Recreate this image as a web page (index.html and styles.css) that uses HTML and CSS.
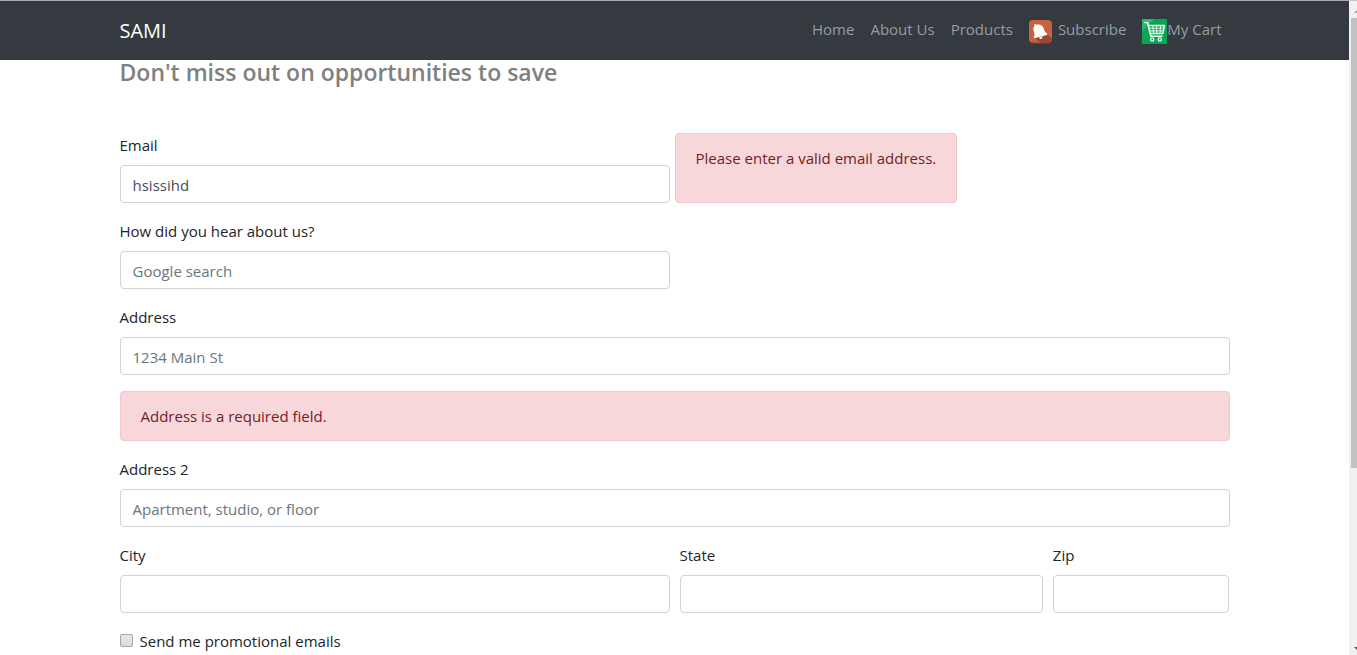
FILE: index.html
```html
<!DOCTYPE html>
<html lang="en">
<head>
<meta charset="utf-8">
<meta name="viewport" content="width=device-width, initial-scale=1">
<title>SAMI</title>
<link rel="stylesheet" href="styles.css">
</head>
<body>
<div class="page">
  <header class="navbar">
    <div class="container navbar-inner">
      <a class="brand" href="#">SAMI</a>
      <nav class="nav">
        <a class="nav-link" href="#">Home</a>
        <a class="nav-link" href="#">About Us</a>
        <a class="nav-link" href="#">Products</a>
        <a class="nav-link nav-link-spaced" href="#">
          <svg class="nav-icon" viewBox="0 0 25 25" aria-hidden="true">
            <rect x="0" y="1.5" width="23" height="23" rx="4" fill="#8f4329"/>
            <rect x="0" y="1" width="23" height="22.5" rx="4" fill="#c8613f"/>
            <path d="M18 15.500 23 19.500V20q0 3.500-4 3.500H11.500L5 18.500Z" fill="#974a30"/>
            <path d="M5.200 5.300 6.500 4.700 7.300 5.900C10.600 4.900 13.700 6.500 14.700 9.500 15.600 12.400 16.300 13.600 18.300 14.700L18 16.100 5.200 19.300 4.700 18C6 16.500 5.700 15 4.800 12.500 4 10.100 4.300 8 5.800 6.700Z" fill="#fff"/>
            <path d="M10 18.500 13.600 17.600Q13.600 19.800 11.900 20 10.400 20.100 10 18.500Z" fill="#fff"/>
          </svg>
          <span>Subscribe</span>
        </a>
        <a class="nav-link" href="#">
          <svg class="nav-icon" viewBox="0 0 25 25" aria-hidden="true">
            <rect width="25" height="25" fill="#08a552"/>
            <path d="M0 0H12L0 13Z" fill="#2bb56d"/>
            <g fill="none" stroke="#e9fff2" stroke-linecap="round" stroke-linejoin="round">
              <path d="M2.500 3.500H5.500L8.800 17.200H20M6 6.500H22.500L20.800 14.500H8.300" stroke-width="1.500"/>
              <path d="M7 9.200H21.800M7.800 11.900H21.200M10.800 6.500 11.500 14.500M14.600 6.500V14.500M18.600 6.500 18 14.500" stroke-width="1"/>
              <circle cx="10.300" cy="20.500" r="1.600" stroke-width="1.300"/>
              <circle cx="17.800" cy="20.500" r="1.600" stroke-width="1.300"/>
            </g>
          </svg>
          <span>My Cart</span>
        </a>
      </nav>
    </div>
  </header>

  <main class="container">
    <h1 class="title">Don't miss out on opportunities to save</h1>
    <form class="form">
      <div class="row">
        <div class="field span-6">
          <label for="email">Email</label>
          <input id="email" type="text" value="hsissihd">
        </div>
        <div class="alert alert-side" role="alert">Please enter a valid email address.</div>
      </div>
      <div class="row">
        <div class="field span-6">
          <label for="source">How did you hear about us?</label>
          <input id="source" type="text" placeholder="Google search">
        </div>
      </div>
      <div class="field">
        <label for="address">Address</label>
        <input id="address" type="text" placeholder="1234 Main St">
      </div>
      <div class="alert" role="alert">Address is a required field.</div>
      <div class="field">
        <label for="address2">Address 2</label>
        <input id="address2" type="text" placeholder="Apartment, studio, or floor">
      </div>
      <div class="row">
        <div class="field span-6">
          <label for="city">City</label>
          <input id="city" type="text">
        </div>
        <div class="field span-4">
          <label for="state">State</label>
          <input id="state" type="text">
        </div>
        <div class="field span-2">
          <label for="zip">Zip</label>
          <input id="zip" type="text">
        </div>
      </div>
      <div class="check">
        <input id="promo" type="checkbox">
        <label for="promo">Send me promotional emails</label>
      </div>
    </form>
  </main>
</div>
<div class="scrollbar" aria-hidden="true">
  <svg class="scroll-arrow" viewBox="0 0 8 17"><path d="M5 12 9 8V12Z" fill="#a3a3a3"/></svg>
  <div class="scroll-track"><div class="scroll-thumb"></div></div>
  <svg class="scroll-arrow" viewBox="0 0 8 17"><path d="M5 9H9V13Z" fill="#505050"/></svg>
</div>
</body>
</html>
```

FILE: styles.css
```css
*,
*::before,
*::after {
  box-sizing: border-box;
}

body {
  display: flex;
  min-height: 100vh;
  margin: 0;
  background: #fff;
  color: #212529;
  font-family: "Segoe UI", "Open Sans", "Noto Sans", sans-serif;
  font-size: 15px;
  line-height: 24px;
}

.page {
  flex: 1;
  min-width: 0;
}

.container {
  width: 100%;
  max-width: 1140px;
  margin: 0 auto;
  padding: 0 15px;
}

.navbar {
  padding: 9px 0;
  border-top: 1px solid #a9abae;
  background: #343a40;
}

.navbar-inner {
  display: flex;
  flex-wrap: wrap;
  align-items: center;
  justify-content: space-between;
}

.brand {
  color: #fff;
  font-size: 20px;
  line-height: 30px;
  text-decoration: none;
}

.nav {
  display: flex;
  flex-wrap: wrap;
}

.nav-link {
  display: flex;
  align-items: flex-start;
  padding: 9px 8px 7px;
  color: #999c9f;
  line-height: 20px;
  text-decoration: none;
}

.nav-link-spaced {
  gap: 4px;
}

.nav-icon {
  width: 25px;
  height: 25px;
}

.title {
  margin: 0 0 48px;
  color: #808080;
  font-size: 23px;
  font-weight: 600;
  line-height: 25px;
}

.row {
  display: flex;
  flex-wrap: wrap;
  margin: 0 -5px;
}

.row .field {
  padding: 0 5px;
}

.field {
  margin-bottom: 16px;
}

.span-6 {
  width: 50%;
}

.span-4 {
  width: 33.3333%;
}

.span-2 {
  width: 16.6666%;
}

.field label {
  display: block;
  margin-bottom: 8px;
}

.field input {
  display: block;
  width: 100%;
  height: 38px;
  padding: 7px 12px 5px;
  border: 1px solid #ced4da;
  border-radius: 4px;
  background: #fff;
  color: #495057;
  font: inherit;
}

.field input::placeholder {
  color: #6c757d;
  opacity: 1;
}

.alert {
  margin-bottom: 16px;
  padding: 12px 20px;
  border: 1px solid #f5c6cb;
  border-radius: 4px;
  background: #f8d7da;
  color: #721c24;
}

.alert-side {
  min-width: 25%;
}

.check {
  display: flex;
  align-items: center;
  gap: 7px;
}

.check input {
  appearance: none;
  width: 13px;
  height: 13px;
  margin: 0 0 2px;
  border: 1px solid #a6a6a6;
  border-radius: 2px;
  background: linear-gradient(#e8e8e8, #dcdcdc);
}

.check input:checked {
  background: #505050;
}

.scrollbar {
  display: flex;
  flex: 0 0 8px;
  flex-direction: column;
  border-top: 1px solid #c4c4c4;
  background: #f1f1f1;
}

.scroll-arrow {
  width: 8px;
  height: 17px;
}

.scroll-track {
  flex: 1;
  padding-left: 2px;
}

.scroll-thumb {
  height: 72.5%;
  background: #c1c1c1;
}
```
